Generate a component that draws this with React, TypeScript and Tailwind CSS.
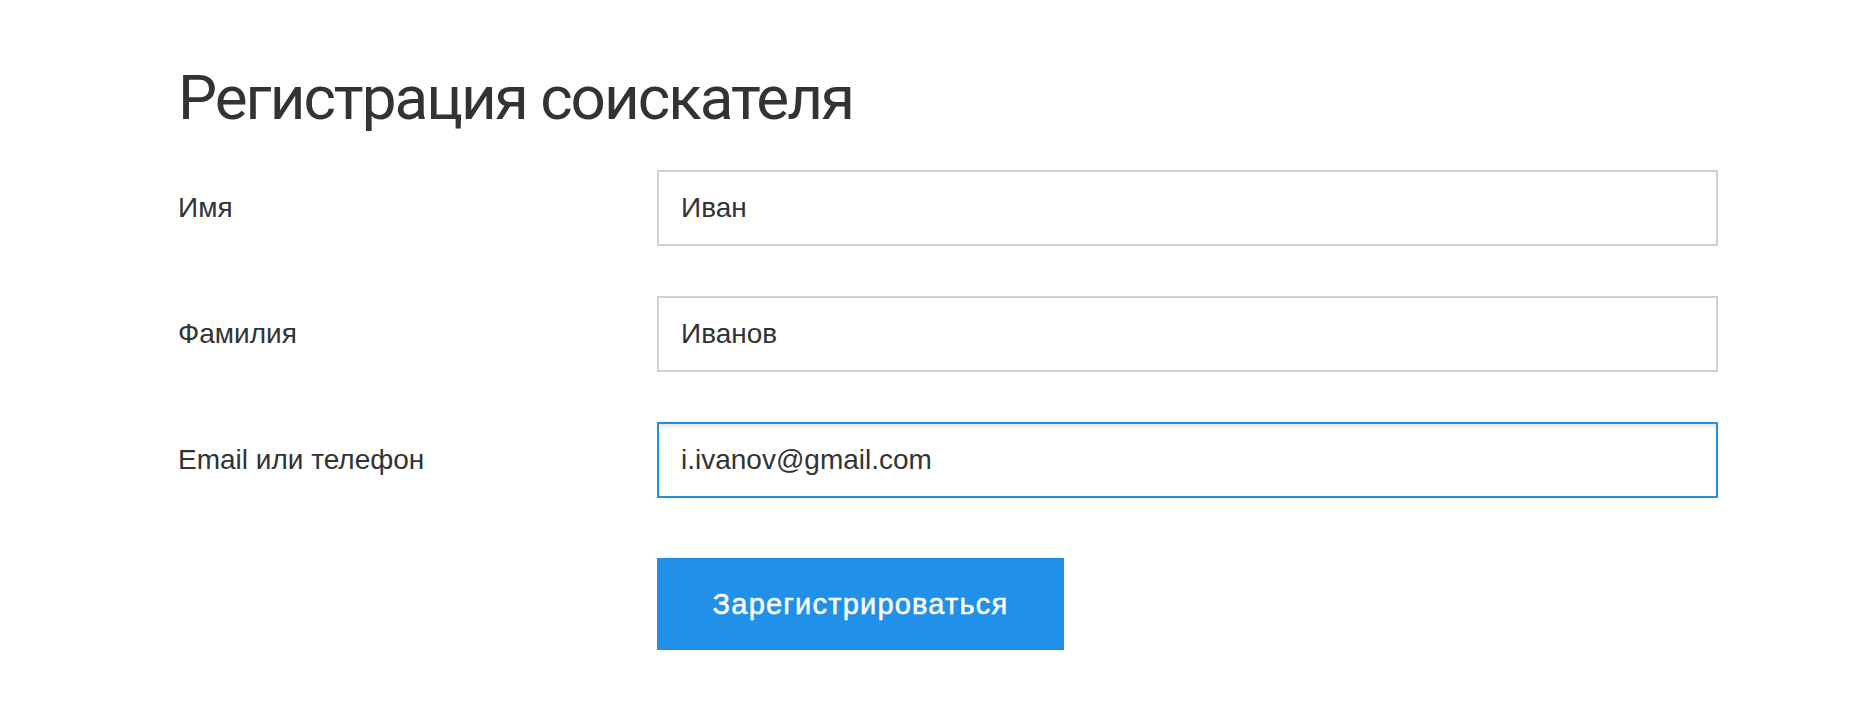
import React from "react";

const Row = ({ label, value, focused }: { label: string; value: string; focused?: boolean }) => (
  <div className="flex items-center">
    <div className="w-[479px] shrink-0 text-[28px] leading-none text-[#333333]">{label}</div>
    <input
      readOnly
      value={value}
      className={
        focused
          ? "w-[1061px] h-[76px] border-2 border-[#2190e8] px-[22px] text-[28px] text-[#333333] outline-none shadow-[inset_0_3px_3px_rgba(0,0,0,0.10)] font-['Liberation_Sans',Arial,sans-serif]"
          : "w-[1061px] h-[76px] border-2 border-[#cdd1d4] px-[22px] text-[28px] text-[#333333] outline-none font-['Liberation_Sans',Arial,sans-serif]"
      }
    />
  </div>
);

export default function App() {
  return (
    <div className="min-h-[706px] bg-white font-['Liberation_Sans',Arial,sans-serif]">
      <div className="pl-[178px] pt-[67px]">
        <h1 className="font-['Roboto',sans-serif] font-normal text-[62px] leading-[62px] tracking-[-2px] text-[#333333]">
          Регистрация соискателя
        </h1>
        <div className="mt-[41px] flex flex-col gap-[50px]">
          <Row label="Имя" value="Иван" />
          <Row label="Фамилия" value="Иванов" />
          <Row label="Email или телефон" value="i.ivanov@gmail.com" focused />
        </div>
        <div className="mt-[60px] pl-[479px]">
          <button className="w-[407px] h-[92px] bg-[#2190e8] text-white text-[29px] font-normal leading-none tracking-[1.2px] [-webkit-text-stroke:0.5px_white]">
            Зарегистрироваться
          </button>
        </div>
      </div>
    </div>
  );
}
